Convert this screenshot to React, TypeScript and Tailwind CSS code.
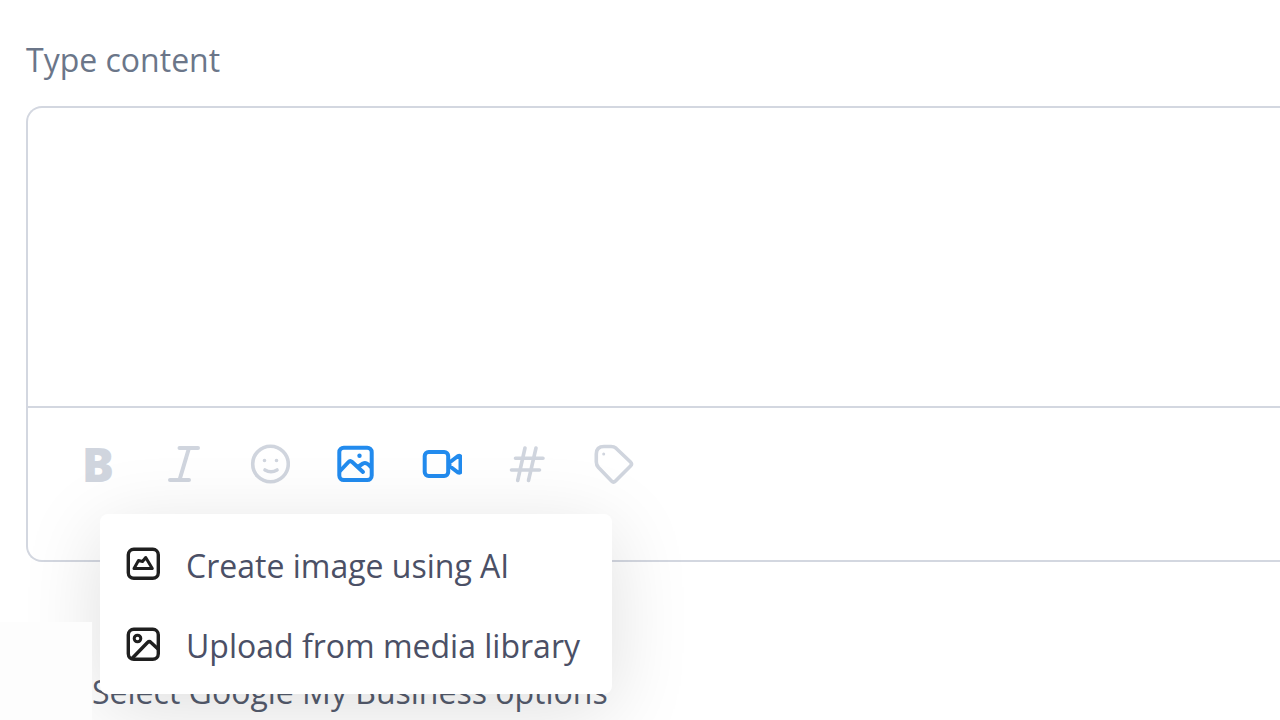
import React from 'react';

interface IconProps {
  className?: string;
}

const ItalicIcon = ({ className }: IconProps) => (
  <svg viewBox="0 0 40 40" className={className} fill="none" stroke="currentColor" strokeWidth="4" strokeLinecap="round">
    <path d="M15.5 4H34M6 36H25M25 4 15.5 36" />
  </svg>
);

const SmileIcon = ({ className }: IconProps) => (
  <svg viewBox="0 0 40 40" className={className} fill="none" stroke="currentColor" strokeWidth="3.6" strokeLinecap="round">
    <circle cx="20.5" cy="20" r="17.8" />
    <path d="M15 26q6 3.6 12 0" />
    <path d="M14.5 16.5h.01M26.5 16.5h.01" />
  </svg>
);

const ImageIcon = ({ className }: IconProps) => (
  <svg viewBox="0 0 40 40" className={className} fill="none" stroke="currentColor" strokeWidth="4" strokeLinecap="round" strokeLinejoin="round">
    <rect x="3.3" y="3.7" width="32.4" height="32.4" rx="4.5" />
    <path d="M4 27 12.5 18q1.700-1.800 3.700 0L27 28M22.500 22.500l4.500-3q2.500-1.300 5 .7l3 3" />
    <circle cx="23.5" cy="11.7" r="2.2" fill="currentColor" stroke="none" />
  </svg>
);

const VideoIcon = ({ className }: IconProps) => (
  <svg viewBox="0 0 40 40" className={className} fill="none" stroke="currentColor" strokeWidth="4" strokeLinecap="round" strokeLinejoin="round">
    <rect x="2.700" y="8" width="23.500" height="24" rx="4" />
    <path d="M27.500 18.500 36 12q2.500-1 2.500 1.500v13.500q0 2.500-2.500 1.500L27.500 22z" />
  </svg>
);

const HashIcon = ({ className }: IconProps) => (
  <svg viewBox="0 0 40 40" className={className} fill="none" stroke="currentColor" strokeWidth="3.6" strokeLinecap="round">
    <path d="M17 4 9.700 36.500M28 4 20.500 36.500M7.500 14.300H35M3.500 26H31.500" />
  </svg>
);

const TagIcon = ({ className }: IconProps) => (
  <svg viewBox="0 0 40 40" className={className} fill="none" stroke="currentColor" strokeWidth="3.6" strokeLinecap="round" strokeLinejoin="round">
    <path d="M10 2.500h7q3 0 5 1.700L36.500 18q2 2 0 4L21.500 37q-2 2-4 0L4.500 23.500Q2.300 21 2.300 18V10q0-7.500 7.700-7.500z" />
    <path d="M9.700 10h.01" strokeWidth="3" />
  </svg>
);

const AiImageIcon = ({ className }: IconProps) => (
  <svg viewBox="0 0 34 34" className={className} fill="none" stroke="currentColor" strokeWidth="3.4" strokeLinejoin="round">
    <rect x="2.3" y="2.3" width="30" height="29" rx="5.5" />
    <path d="M8 21.500 12.500 13.500 16.500 14.500 19.700 10.500 26.300 21.500z" strokeWidth="3" />
  </svg>
);

const LibraryIcon = ({ className }: IconProps) => (
  <svg viewBox="0 0 34 34" className={className} fill="none" stroke="currentColor" strokeWidth="3.4" strokeLinejoin="round">
    <rect x="2.3" y="2.3" width="30" height="30" rx="5.5" />
    <circle cx="11.5" cy="11.5" r="3.3" strokeWidth="3" />
    <path d="M6 31.500 21.500 15.500q1.800-1.700 3.500 0l7 6.500" />
  </svg>
);

const tools = [
  { label: 'Italic', Icon: ItalicIcon, active: false },
  { label: 'Emoji', Icon: SmileIcon, active: false },
  { label: 'Image', Icon: ImageIcon, active: true },
  { label: 'Video', Icon: VideoIcon, active: true },
  { label: 'Hashtag', Icon: HashIcon, active: false },
  { label: 'Tag', Icon: TagIcon, active: false },
];

const menuItems = [
  { label: 'Create image using AI', Icon: AiImageIcon },
  { label: 'Upload from media library', Icon: LibraryIcon },
];

const ImageMenu = () => (
  <div
    role="menu"
    className="absolute left-[72px] top-[106px] z-10 rounded-lg bg-white py-2.5 shadow-[0_16px_80px_rgba(0,0,0,0.13)]"
  >
    {menuItems.map(({ label, Icon }) => (
      <button
        key={label}
        type="button"
        role="menuitem"
        className="flex h-20 w-[512px] items-center gap-[26px] px-[26px] text-left text-[#4b5066]"
      >
        <Icon className="h-[34px] w-[34px] shrink-0 text-[#1f1f1f]" />
        <span className="whitespace-nowrap pt-1">{label}</span>
      </button>
    ))}
  </div>
);

export default function App() {
  return (
    <main className="h-screen overflow-hidden bg-white pt-9 font-['Open_Sans',sans-serif] text-[32px] leading-[48px] text-[#6b7689]">
      <label htmlFor="content" className="block pl-[26px]">
        Type content
      </label>

      <div className="ml-[26px] mt-[22px] rounded-l-2xl border-2 border-r-0 border-[#d3d7e0]">
        <textarea id="content" className="block h-[298px] w-full resize-none rounded-tl-2xl p-6 outline-none" />
        <div className="relative border-t-2 border-[#d3d7e0] pb-[76px] pl-[50px] pt-9">
          <div className="flex h-10 items-center gap-[46px] text-[#d0d5de]">
            <button type="button" aria-label="Bold" className="w-10 text-center text-[48px] font-extrabold leading-10">
              B
            </button>
            {tools.map(({ label, Icon, active }) => (
              <button key={label} type="button" aria-label={label} className={active ? 'text-[#228bee]' : ''}>
                <Icon className="h-10 w-10" />
              </button>
            ))}
          </div>
          <ImageMenu />
        </div>
      </div>

      <div className="mt-[60px] flex">
        <div className="relative z-20 h-[100px] w-[92px] shrink-0 bg-[#fdfdfd]" />
        <p className="whitespace-nowrap pt-[46px] text-[#555c6e]">Select Google My Business options</p>
      </div>
    </main>
  );
}
